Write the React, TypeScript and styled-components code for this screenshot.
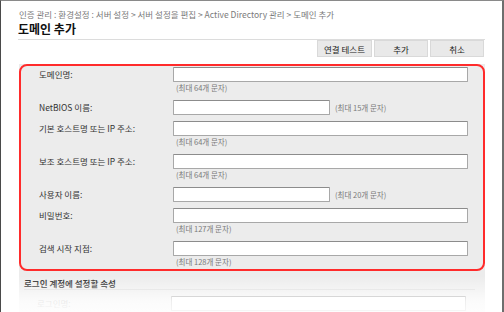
import React from 'react';
import styled, { createGlobalStyle } from 'styled-components';

const GlobalStyle = createGlobalStyle`
    html, body {
        margin: 0;
        padding: 0;
        background: #ffffff;
    }
    #root {
        width: 504px;
        height: 312px;
        overflow: hidden;
    }
`;

const Frame = styled.div`
    position: relative;
    box-sizing: border-box;
    width: 504px;
    height: 312px;
    border-top: 1px solid #8a8a8a;
    border-left: 1px solid #4a4a4a;
    border-right: 2px solid #6e6e6e;
    background: #ffffff;
    font-family: "Noto Sans CJK KR", "Noto Sans", sans-serif;
    overflow: hidden;
`;

const Content = styled.div`
    display: flex;
    flex-direction: column;
    width: 467px;
    padding: 7px 0 0 17px;
`;

const Breadcrumb = styled.div`
    font-size: 8.5px;
    line-height: 12px;
    color: #7a7a7a;
    padding-left: 1px;
    white-space: nowrap;
`;

const Title = styled.h1`
    margin: 1px 0 0;
    font-size: 12px;
    line-height: 16px;
    font-weight: 700;
    color: #111;
    padding-bottom: 2px;
    border-bottom: 1px solid #dcdcdc;
`;

const Toolbar = styled.div`
    display: flex;
    justify-content: flex-end;
    gap: 2px;
    padding-right: 1px;
`;

const Button = styled.button<{ $width: number }>`
    box-sizing: border-box;
    width: ${p => p.$width}px;
    height: 17px;
    padding: 0;
    border: 1px solid #d9d9d9;
    background: #e9e9e9;
    font-family: inherit;
    font-size: 8.5px;
    color: #222;
`;

const Panel = styled.div`
    display: flex;
    flex-direction: column;
    margin: 7px 0 0 1px;
    background: #ececec;
`;

const Highlight = styled.div`
    display: flex;
    flex-direction: column;
    gap: 6px;
    border: 2px solid #ff2b2b;
    border-radius: 8px;
    padding: 1px 0 1px;
`;

const Row = styled.div`
    display: grid;
    grid-template-columns: 134px 1fr;
    align-items: start;
    padding-left: 18px;
`;

const Label = styled.div<{ $faded?: boolean }>`
    font-size: 8.5px;
    line-height: 15px;
    color: ${p => (p.$faded ? '#9a9a9a' : '#333')};
    white-space: nowrap;
`;

const Field = styled.div`
    display: flex;
    flex-direction: column;
`;

const InputLine = styled.div`
    display: flex;
    align-items: center;
    gap: 5px;
`;

const Input = styled.div<{ $short?: boolean }>`
    box-sizing: border-box;
    width: ${p => (p.$short ? 157 : 295)}px;
    height: 15px;
    background: #fff;
    border: 1px solid #a8a8a8;
    border-top-color: #8c8c8c;
    border-radius: 1px;
`;

const Hint = styled.div`
    font-size: 7.5px;
    line-height: 12px;
    color: #7a7a7a;
    padding-left: 3px;
    white-space: nowrap;
`;

const InlineHint = styled(Hint)`
    padding-left: 0;
`;

const SectionTitle = styled.div`
    margin: 6px 10px 0 5px;
    border-bottom: 1px solid #d8d8d8;
    font-size: 8.5px;
    line-height: 12px;
    font-weight: 700;
    color: #222;
`;

const SectionRow = styled(Row)`
    margin-top: 6px;
    padding-bottom: 20px;
`;

const Fade = styled.div`
    position: absolute;
    left: 0;
    right: 0;
    bottom: 0;
    height: 36px;
    background: linear-gradient(to bottom, rgba(255, 255, 255, 0) 0%, rgba(255, 255, 255, 0.35) 30%, rgba(255, 255, 255, 0.8) 70%, rgba(255, 255, 255, 0.9) 100%);
    pointer-events: none;
`;

type FieldDef = {
    label: string;
    hint?: string;
    short?: boolean;
};

const fields: FieldDef[] = [
    { label: '도메인명:', hint: '(최대 64개 문자)' },
    { label: 'NetBIOS 이름:', hint: '(최대 15개 문자)', short: true },
    { label: '기본 호스트명 또는 IP 주소:', hint: '(최대 64개 문자)' },
    { label: '보조 호스트명 또는 IP 주소:', hint: '(최대 64개 문자)' },
    { label: '사용자 이름:', hint: '(최대 20개 문자)', short: true },
    { label: '비밀번호:', hint: '(최대 127개 문자)' },
    { label: '검색 시작 지점:', hint: '(최대 128개 문자)' },
];

const App: React.FC = () => {
    return (
        <>
            <GlobalStyle />
            <Frame>
                <Content>
                    <Breadcrumb>
                        인증 관리 : 환경설정 : 서버 설정 &gt; 서버 설정을 편집 &gt; Active Directory 관리 &gt; 도메인 추가
                    </Breadcrumb>
                    <Title>도메인 추가</Title>
                    <Toolbar>
                        <Button $width={55}>연결 테스트</Button>
                        <Button $width={54}>추가</Button>
                        <Button $width={54}>취소</Button>
                    </Toolbar>
                    <Panel>
                        <Highlight>
                            {fields.map(f => (
                                <Row key={f.label}>
                                    <Label>{f.label}</Label>
                                    <Field>
                                        {f.short ? (
                                            <InputLine>
                                                <Input $short />
                                                <InlineHint>{f.hint}</InlineHint>
                                            </InputLine>
                                        ) : (
                                            <>
                                                <Input />
                                                {f.hint && <Hint>{f.hint}</Hint>}
                                            </>
                                        )}
                                    </Field>
                                </Row>
                            ))}
                        </Highlight>
                        <SectionTitle>로그인 계정에 설정할 속성</SectionTitle>
                        <SectionRow>
                            <Label $faded>로그인명:</Label>
                            <Field>
                                <Input />
                            </Field>
                        </SectionRow>
                    </Panel>
                </Content>
                <Fade />
            </Frame>
        </>
    );
};

export default App;
